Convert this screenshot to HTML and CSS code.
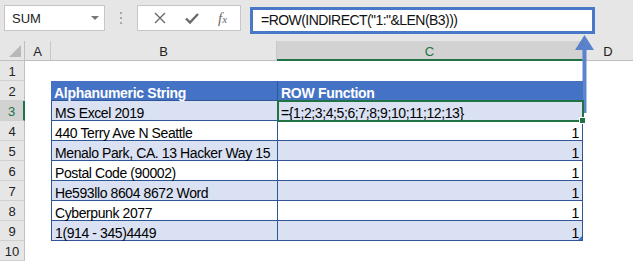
FILE: index.html
```html
<html>
<head>
<meta http-equiv="Content-Type" content="text/html; charset=utf-8">
<title>ROW INDIRECT</title>
<link rel="stylesheet" href="styles.css">
</head>
<body>
<div id="app">
	<div class="bar">
		<div class="namebox">
			<span>SUM</span>
			<i class="drop"></i>
		</div>
		<div class="dots"><i></i><i></i><i></i></div>
		<div class="btns">
			<svg class="ico" width="14" height="14" viewBox="0 0 14 14"><path d="M2 2 L12 12 M12 2 L2 12" stroke="#6a6a6a" stroke-width="1.4" fill="none"/></svg>
			<svg class="ico" width="16" height="14" viewBox="0 0 16 14"><path d="M2 7.5 L6 11.5 L14 3" stroke="#6a6a6a" stroke-width="2.4" fill="none"/></svg>
			<span class="fx">f<small>x</small></span>
		</div>
		<div class="formula">=ROW(INDIRECT("1:"&amp;LEN(B3)))</div>
	</div>
	<div class="sheet">
		<div class="corner"><i></i></div>
		<div class="colh">A</div>
		<div class="colh">B</div>
		<div class="colh sel">C</div>
		<div class="colh last">D</div>

		<div class="rowh">1</div><div class="c"></div><div class="c"></div><div class="c"></div><div class="c"></div>
		<div class="rowh">2</div><div class="c"></div><div class="c th">Alphanumeric String</div><div class="c th">ROW Function</div><div class="c"></div>
		<div class="rowh sel">3</div><div class="c"></div><div class="c td odd">MS Excel 2019</div><div class="c td odd active">={1;2;3;4;5;6;7;8;9;10;11;12;13}</div><div class="c"></div>
		<div class="rowh">4</div><div class="c"></div><div class="c td">440 Terry Ave N Seattle</div><div class="c td num">1</div><div class="c"></div>
		<div class="rowh">5</div><div class="c"></div><div class="c td odd">Menalo Park, CA. 13 Hacker Way 15</div><div class="c td odd num">1</div><div class="c"></div>
		<div class="rowh">6</div><div class="c"></div><div class="c td">Postal Code (90002)</div><div class="c td num">1</div><div class="c"></div>
		<div class="rowh">7</div><div class="c"></div><div class="c td odd">He593llo 8604 8672 Word</div><div class="c td odd num">1</div><div class="c"></div>
		<div class="rowh">8</div><div class="c"></div><div class="c td">Cyberpunk 2077</div><div class="c td num">1</div><div class="c"></div>
		<div class="rowh">9</div><div class="c"></div><div class="c td odd lastrow">1(914 - 345)4449</div><div class="c td odd num lastrow corner-mark">1</div><div class="c"></div>
		<div class="rowh">10</div><div class="c"></div><div class="c"></div><div class="c"></div><div class="c"></div>
	</div>
	<svg class="arrow" width="20" height="82" viewBox="0 0 20 82"><path d="M7.5 15 L0 15 L9.5 0 L19 15 L11.5 15 L11.5 78 L7.5 78 Z" fill="#4a78c8" fill-opacity="0.9"/></svg>
</div>
</body>
</html>
```

FILE: styles.css
```css
body{
	margin:0;
	background:#fff;
	font-family:"Liberation Sans",Arial,sans-serif;
}
#app{
	width:633px;
	height:261px;
	position:relative;
	overflow:hidden;
}
.bar{
	height:41px;
	background:#e6e6e6;
	display:flex;
	align-items:flex-start;
	padding:5px 0 0 4px;
	box-sizing:border-box;
}
.namebox{
	width:101px;
	height:26px;
	background:#fff;
	border:1px solid #c6c6c6;
	box-sizing:border-box;
	display:flex;
	align-items:center;
	justify-content:space-between;
	padding:0 5px 0 7px;
	font-size:13px;
	color:#222;
}
.drop{
	width:0;
	height:0;
	border-left:4px solid transparent;
	border-right:4px solid transparent;
	border-top:4px solid #777;
}
.dots{
	width:32px;
	height:26px;
	display:flex;
	flex-direction:column;
	align-items:center;
	justify-content:center;
	gap:3px;
}
.dots i{
	width:2px;
	height:2px;
	background:#a8a8a8;
}
.btns{
	width:104px;
	height:26px;
	background:#fff;
	border:1px solid #c6c6c6;
	box-sizing:border-box;
	display:flex;
	align-items:center;
	justify-content:space-around;
	padding:0 4px 0 6px;
}
.fx{
	font-family:"Liberation Serif",serif;
	font-style:italic;
	font-size:15px;
	color:#6a6a6a;
}
.fx small{
	font-size:11px;
}
.formula{
	margin:2px 0 0 9px;
	width:345px;
	height:27px;
	border:3px solid #4a78c8;
	box-sizing:border-box;
	background:#fff;
	font-size:14px;
	letter-spacing:-0.55px;
	line-height:21px;
	padding-left:8px;
	color:#111;
	white-space:nowrap;
}
.sheet{
	display:grid;
	grid-template-columns:25px 26px 226px 306px 50px;
	grid-template-rows:20px repeat(10,20px);
	font-size:14px;
}
.corner{
	background:#e6e6e6;
	border-right:1px solid #c0c0c0;
	border-bottom:1px solid #c0c0c0;
	position:relative;
}
.corner i{
	position:absolute;
	right:3px;
	bottom:3px;
	width:0;
	height:0;
	border-left:12px solid transparent;
	border-bottom:12px solid #b8b8b8;
}
.colh{
	background:#e6e6e6;
	border-right:1px solid #c8c8c8;
	border-bottom:1px solid #bdbdbd;
	text-align:center;
	font-size:13px;
	line-height:21px;
	color:#222;
}
.colh.last{
	border-right:none;
}
.colh.sel{
	background:#d2d2d2;
	border-bottom:2px solid #217346;
	color:#217346;
}
.rowh{
	background:#e6e6e6;
	border-right:1px solid #c0c0c0;
	border-bottom:1px solid #d0d0d0;
	text-align:center;
	font-size:13px;
	line-height:22px;
	color:#222;
}
.rowh.sel{
	background:#d2d2d2;
	border-right:2px solid #217346;
	color:#217346;
}
.c{
	white-space:nowrap;
	line-height:24px;
	padding:0 3px;
	letter-spacing:-0.4px;
	overflow:visible;
}
.th{
	background:#4472c4;
	color:#fff;
	font-weight:bold;
	letter-spacing:-0.3px;
	border-bottom:1px solid #2f5597;
}
.th + .th{
	border-left:1px solid #2f5597;
}
.td{
	background:#fff;
	border-bottom:1px solid #2f5597;
	color:#000;
	box-sizing:border-box;
	height:20px;
}
.td.odd{
	background:#d9e1f2;
}
.td.num{
	text-align:right;
	border-left:1px solid #2f5597;
	border-right:1px solid #2f5597;
}
.sheet > .td:not(.num):not(.active){
	border-left:1px solid #2f5597;
}
.active{
	position:relative;
	border-left:1px solid #2f5597;
	border-right:1px solid #2f5597;
	z-index:1;
}
.active::before{
	content:"";
	position:absolute;
	left:-1px;
	top:-1px;
	right:-2px;
	bottom:-2px;
	border:2px solid #217346;
}
.active::after{
	content:"";
	position:absolute;
	right:-4px;
	bottom:-4px;
	width:5px;
	height:5px;
	background:#217346;
	border:1px solid #fff;
}
.corner-mark{
	position:relative;
}
.corner-mark::after{
	content:"";
	position:absolute;
	right:0;
	bottom:0;
	width:0;
	height:0;
	border-left:4px solid transparent;
	border-bottom:4px solid #4472c4;
}
.arrow{
	position:absolute;
	left:575px;
	top:35px;
}
```
